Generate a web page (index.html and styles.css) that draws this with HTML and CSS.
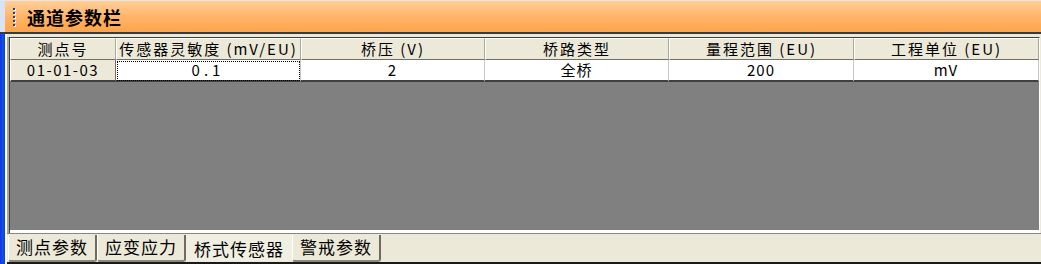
FILE: index.html
```html
<!DOCTYPE html>
<html>
<head>
<meta charset="utf-8">
<link rel="stylesheet" href="styles.css">
</head>
<body>
<div class="app">
  <div class="titlebar">
    <span class="corner"></span>
    <span class="grip"><i></i><i></i><i></i><i></i><i></i></span>
    <span class="title">通道参数栏</span>
  </div>
  <div class="main">
    <div class="side"></div>
    <div class="panel">
      <div class="gridwrap">
        <div class="grid">
          <div class="hc">测点号</div>
          <div class="hc">传感器灵敏度 (mV/EU)</div>
          <div class="hc">桥压 (V)</div>
          <div class="hc">桥路类型</div>
          <div class="hc">量程范围 (EU)</div>
          <div class="hc last">工程单位 (EU)</div>
          <div class="dc first">01-01-03</div>
          <div class="dc focus">0.1</div>
          <div class="dc">2</div>
          <div class="dc">全桥</div>
          <div class="dc">200</div>
          <div class="dc last">mV</div>
        </div>
        <div class="fill"></div>
      </div>
      <div class="tabbar">
        <div class="tab">测点参数</div>
        <div class="tab">应变应力</div>
        <div class="tab active">桥式传感器</div>
        <div class="tab">警戒参数</div>
      </div>
    </div>
  </div>
</div>
</body>
</html>
```
FILE: styles.css
```css
html, body {
  margin: 0;
  padding: 0;
  background: #ece9d8;
}
.app {
  width: 1041px;
  height: 264px;
  display: flex;
  flex-direction: column;
  font-family: "Noto Sans CJK SC", "DejaVu Sans", sans-serif;
  overflow: hidden;
}
.titlebar {
  height: 31px;
  border-top: 1px solid #dce6f6;
  border-bottom: 2px solid #3a3a3a;
  background: linear-gradient(#ffcf98, #ffb366 55%, #ffa44a);
  display: flex;
  align-items: center;
  flex-shrink: 0;
}
.corner {
  width: 5px;
  align-self: stretch;
  background: #d9e3f5;
}
.grip {
  display: flex;
  flex-direction: column;
  gap: 2px;
  margin-left: 8px;
  width: 3px;
}
.grip i {
  display: block;
  width: 2px;
  height: 2px;
  background: #1a3fa0;
  box-shadow: 1px 1px 0 #fff;
}
.title {
  margin-left: 11px;
  font-weight: bold;
  font-size: 18px;
  color: #000;
  letter-spacing: 1px;
}
.main {
  flex: 1;
  display: flex;
  min-height: 0;
}
.side {
  width: 5px;
  background: linear-gradient(90deg, #0a3ad8, #1650f0 60%, #0a3ad8);
  flex-shrink: 0;
}
.panel {
  flex: 1;
  display: flex;
  flex-direction: column;
  border-left: 2px solid #ffffff;
  background: #ece9d8;
  padding-top: 3px;
}
.gridwrap {
  flex: 1;
  display: flex;
  flex-direction: column;
  margin-left: 2px;
  margin-right: 1px;
  border-top: 1px solid #404040;
  border-left: 1px solid #404040;
  border-right: 1px solid #ffffff;
  box-shadow: -2px 0 0 #aca899;
}
.grid {
  display: grid;
  grid-template-columns: 106px 185px 184px 184px 185px 1fr;
  background: #ece9d8;
}
.hc {
  height: 20px;
  line-height: 20px;
  text-align: center;
  font-size: 15px;
  letter-spacing: 2px;
  color: #000;
  border-top: 1px solid #ffffff;
  border-left: 1px solid #ffffff;
  border-right: 1px solid #aca899;
  border-bottom: 1px solid #716f64;
  white-space: nowrap;
}
.dc {
  line-height: 20px;
  text-align: center;
  font-size: 15px;
  letter-spacing: 1px;
  color: #000;
  background: #ffffff;
  border-right: 1px solid #c8c8c8;
  border-bottom: 2px solid #404040;
  white-space: nowrap;
  box-sizing: border-box;
  height: 22px;
}
.dc.first {
  background: #ece9d8;
  border-left: 1px solid #ffffff;
  border-right: 1px solid #716f64;
  letter-spacing: 1.5px;
}
.dc.focus {
  outline: 1px dotted #000;
  outline-offset: -2px;
  letter-spacing: 4px;
}
.fill {
  flex: 1;
  background: #808080;
  border-bottom: 3px solid #ffffff;
}
.tabbar {
  height: 31px;
  flex-shrink: 0;
  display: flex;
  align-items: flex-start;
  padding-left: 1px;
  border-top: 1px solid #8a8878;
  border-bottom: 2px solid #1a1a1a;
  box-sizing: border-box;
}
.tab {
  height: 25px;
  line-height: 24px;
  padding: 0 7px;
  font-size: 17px;
  letter-spacing: 1px;
  color: #000;
  border-left: 1px solid #ffffff;
  border-right: 2px solid #6e6c60;
  border-bottom: 2px solid #8a8878;
  border-radius: 0 0 3px 3px;
  margin-top: 1px;
}
.tab.active {
  border: none;
  height: 27px;
  line-height: 30px;
  padding: 0 8px;
  background: #f1efe2;
  margin-top: 0;
}
```
